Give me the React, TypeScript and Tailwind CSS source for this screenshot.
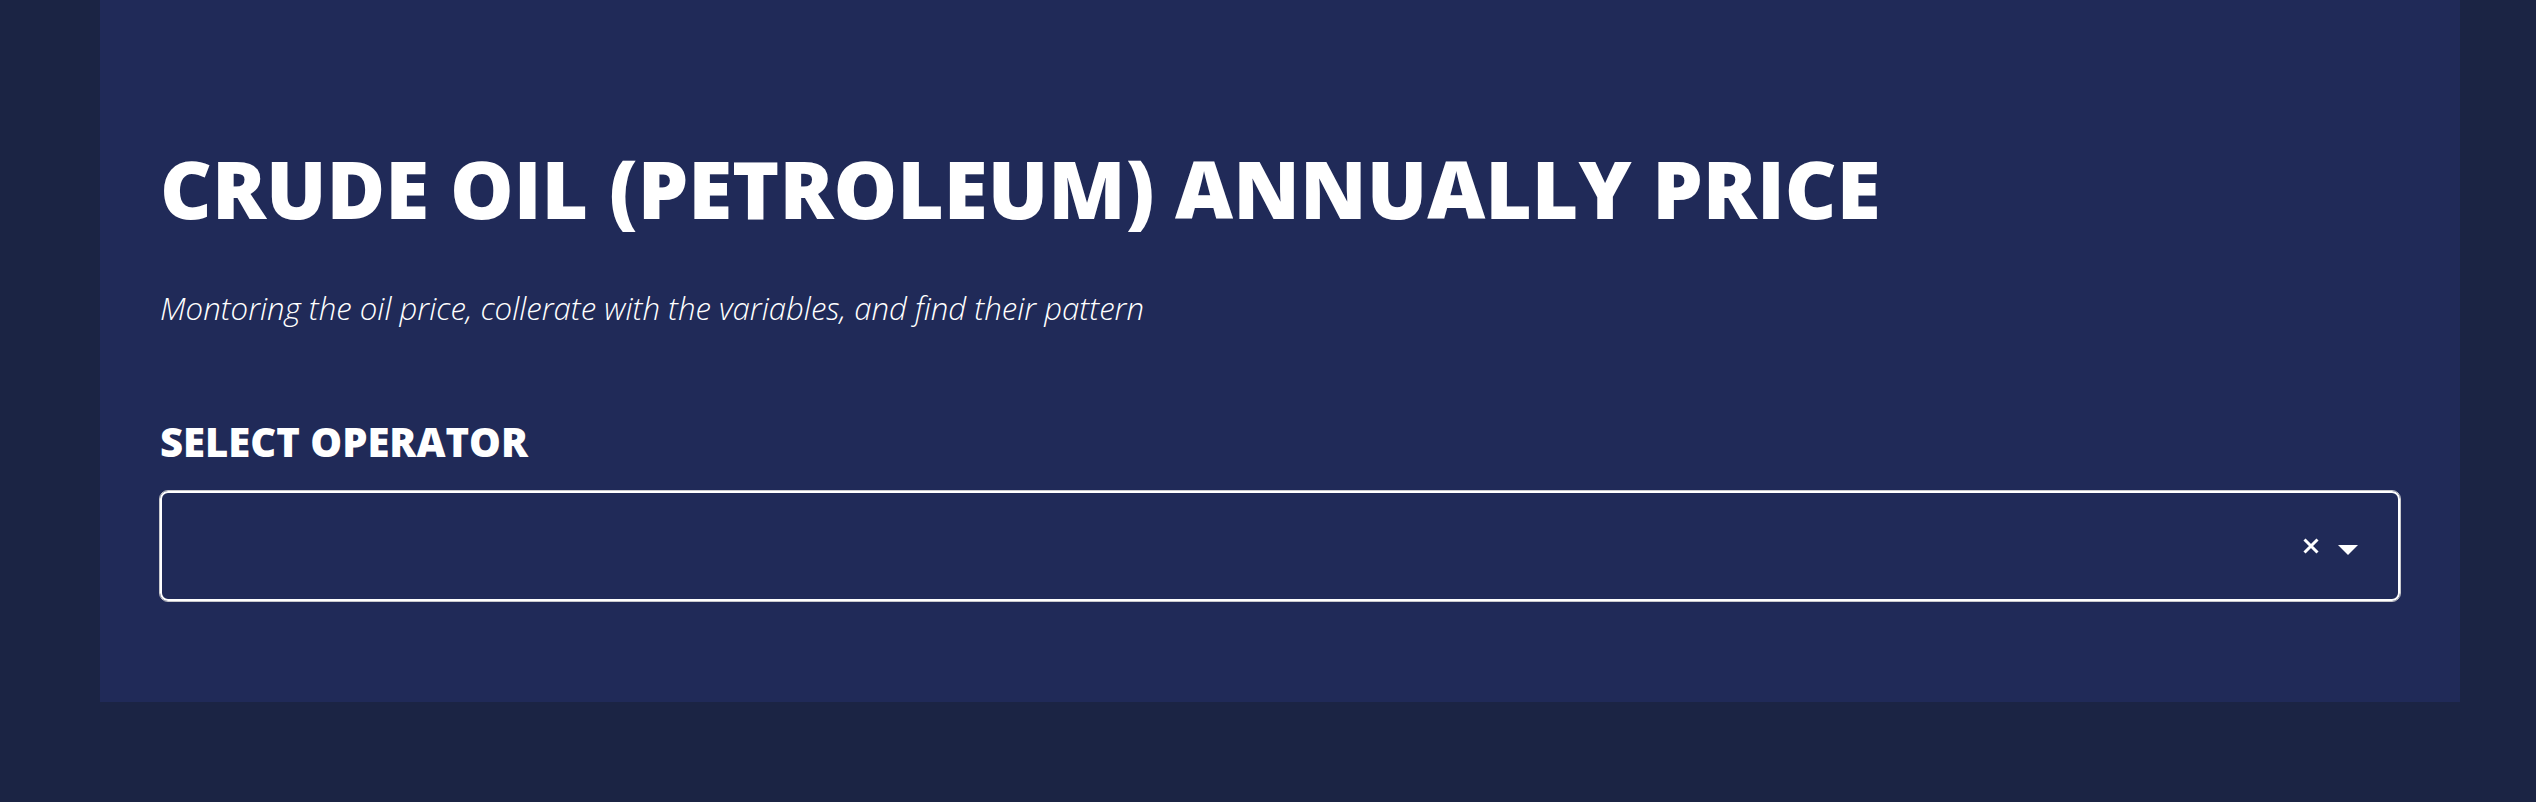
import React from 'react';

const App: React.FC = () => {
  return (
    <div className="min-h-[802px] w-full bg-[#1b2444] font-['Open_Sans',sans-serif]">
      <div className="ml-[100px] w-[2360px] bg-[#202a58] px-[60px] pt-[148px] pb-[101px]">
        <h1 className="text-[80px] leading-[80px] font-extrabold text-white tracking-normal">
          CRUDE OIL (PETROLEUM) ANNUALLY PRICE
        </h1>
        <p className="mt-[65px] text-[31.2px] leading-[30px] font-light italic text-white">
          Montoring the oil price, collerate with the variables, and find their pattern
        </p>
        <label className="block mt-[99px] text-[40px] leading-[40px] font-extrabold text-white">
          SELECT OPERATOR
        </label>
        <div className="mt-[29px] h-[110px] rounded-[8px] border-2 border-white outline outline-1 outline-[#c8c8cc] flex items-center justify-end pr-[40px]">
          <div className="flex items-center gap-[19px]">
            <svg width="16" height="16" viewBox="0 0 16 16" className="text-white">
              <path d="M1.5 1.5 L14.5 14.5 M14.5 1.5 L1.5 14.5" stroke="currentColor" strokeWidth="3" strokeLinecap="butt" />
            </svg>
            <svg width="20" height="10" viewBox="0 0 20 10" className="text-white mt-[8px]">
              <path d="M0 0 L20 0 L10 10 Z" fill="currentColor" />
            </svg>
          </div>
        </div>
      </div>
    </div>
  );
};

export default App;
